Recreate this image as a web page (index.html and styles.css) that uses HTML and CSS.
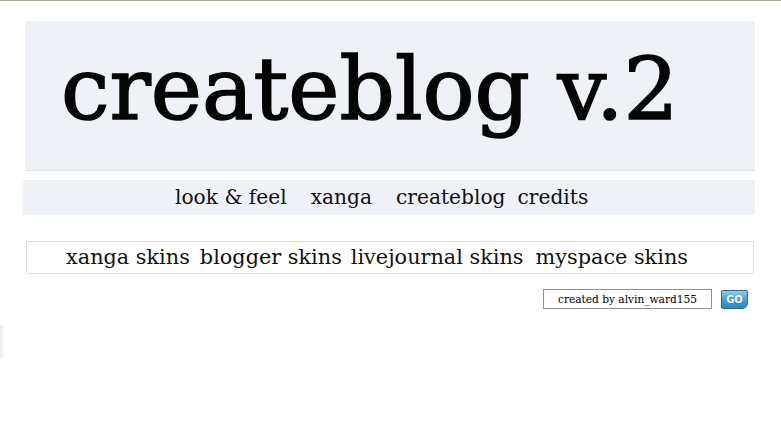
FILE: index.html
```html
<!DOCTYPE html>
<html>
<head>
<meta charset="utf-8">
<link rel="stylesheet" href="styles.css">
</head>
<body>
<div class="topline"></div>
<div class="page">
  <div class="header"><h1 class="title">createblog v.2</h1></div>
  <nav class="nav">
    <a class="nav-link n1">look &amp; feel</a>
    <a class="nav-link n2">xanga</a>
    <a class="nav-link n3">createblog</a>
    <a class="nav-link n4">credits</a>
  </nav>
  <div class="skins">
    <a class="skin s1">xanga skins</a>
    <a class="skin s2">blogger skins</a>
    <a class="skin s3">livejournal skins</a>
    <a class="skin s4">myspace skins</a>
  </div>
  <div class="search">
    <div class="search-input">created by alvin_ward155</div>
    <button class="go">GO</button>
  </div>
</div>
<div class="sidetab"></div>
</body>
</html>
```
FILE: styles.css
```css
html, body { margin: 0; padding: 0; background: #fff; }
body { font-family: "DejaVu Serif", serif; color: #111; width: 781px; height: 435px; overflow: hidden; }
.topline { height: 1px; background: #a9aa9a; }
.page { padding: 20px 0 0 0; }
.header { margin-left: 25px; width: 730px; height: 150px; background: #eef2f7; border-bottom: 1px solid #dde2e8; box-sizing: border-box; display: flex; align-items: flex-start; }
.title { margin: 18px 0 0 36px; font-weight: normal; font-size: 86.5px; line-height: 100px; letter-spacing: 0; color: #050505; -webkit-text-stroke: 1.6px #050505; }
.nav { margin: 9px 0 0 23px; width: 732px; height: 35px; background: #eef2f7; display: flex; align-items: center; padding-left: 152px; padding-bottom: 1px; box-sizing: border-box; }
.nav-link { font-size: 20.2px; color: #111; }
.n2 { margin-left: 24px; }
.n3 { margin-left: 24px; }
.n4 { margin-left: 12px; }
.skins { margin: 26px 0 0 26px; width: 728px; height: 33px; border: 1px solid #d3e0e6; box-sizing: border-box; display: flex; align-items: center; padding-left: 39px; padding-bottom: 2px; }
.skin { font-size: 20.8px; color: #111; }
.s2 { margin-left: 10px; }
.s3 { margin-left: 9px; }
.s4 { margin-left: 12px; }
.search { display: flex; margin: 15px 0 0 543px; align-items: center; }
.search-input { width: 169px; height: 20px; border: 1px solid #8f8f8f; box-sizing: border-box; font-size: 10.6px; text-align: center; line-height: 18px; color: #000; }
.go { margin-left: 9px; width: 27px; height: 19px; padding: 0; border: 1px solid #2a6c90; border-radius: 2px 2px 6px 2px; background: linear-gradient(#8ccde8, #3f9bc6 60%, #3189b6); color: #fff; font-family: "DejaVu Sans", sans-serif; font-weight: bold; font-size: 10px; line-height: 17px; text-shadow: 0 0 1px #2a6c90; }
.sidetab { position: absolute; left: 0; top: 325px; width: 3px; height: 33px; background: #eef0f5; }
```
